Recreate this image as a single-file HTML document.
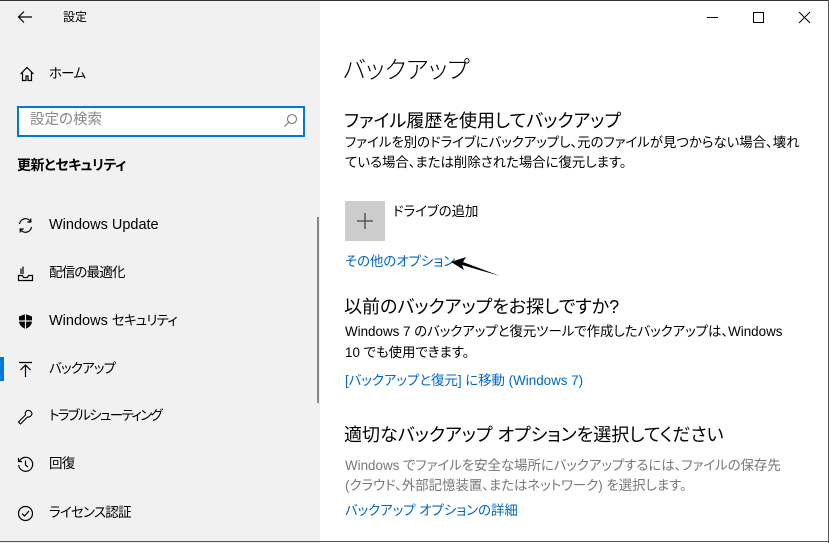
<!DOCTYPE html>
<html><head><meta charset="utf-8"><style>
*{margin:0;padding:0;box-sizing:border-box}
body{width:829px;height:543px;overflow:hidden;background:#fff;font-family:"Liberation Sans","Noto Sans CJK JP",sans-serif;color:#000;position:relative;font-feature-settings:"palt"}
.a{position:absolute;white-space:nowrap;line-height:1;font-feature-settings:"palt"}
#side{position:absolute;left:0;top:0;width:320px;height:543px;background:#f1f1f1}
.it{font-size:14.5px}
.jp{font-size:13.5px;letter-spacing:-0.8px}
.ic{position:absolute}
.blue{color:#0067c0}
.h2{font-size:18px}
.p{font-size:13.4px}
</style></head><body>
<div id="side"></div>
<div style="position:absolute;left:0;top:0;width:829px;height:1px;background:#333"></div>
<div style="position:absolute;right:0;top:0;width:1px;height:543px;background:#555"></div>
<div style="position:absolute;left:0;bottom:1px;width:829px;height:1px;background:#555"></div>

<svg class="ic" style="left:17px;top:10px" width="16" height="14" viewBox="0 0 16 14"><path d="M15 7H2M7 1.5L1.5 7 7 12.5" fill="none" stroke="#000" stroke-width="1.2"/></svg>
<div class="a" style="left:63px;top:11px;font-size:12px">設定</div>

<svg class="ic" style="left:19px;top:66px" width="16" height="16" viewBox="0 0 16 16"><path d="M1.5 8L8 1.5 14.5 8M3.5 6.5V14.5H7V10H9V14.5H12.5V6.5" fill="none" stroke="#000" stroke-width="1.2"/></svg>
<div class="a jp" style="left:49px;top:67px">ホーム</div>

<div style="position:absolute;left:17px;top:106px;width:288px;height:31px;border:2px solid #0078d7;background:#fff"></div>
<div class="a" style="left:30px;top:113px;font-size:14.5px;color:#888">設定の検索</div>
<svg class="ic" style="left:283px;top:113px" width="15" height="15" viewBox="0 0 15 15"><circle cx="9" cy="6" r="4.5" fill="none" stroke="#777" stroke-width="1.1"/><path d="M5.8 9.2L1.5 13.5" stroke="#777" stroke-width="1.1"/></svg>

<div class="a" style="left:17px;top:158px;font-size:14px;font-weight:bold;letter-spacing:-0.5px">更新とセキュリティ</div>

<svg class="ic" style="left:17px;top:217px" width="17" height="17" viewBox="0 0 17 17"><path d="M2.5 7A6 6 0 0 1 13.5 4.5M14.5 10A6 6 0 0 1 3.5 12.5" fill="none" stroke="#000" stroke-width="1.2"/><path d="M13.8 1.5V5H10.3M3.2 15.5V12H6.7" fill="none" stroke="#000" stroke-width="1.2"/></svg>
<div class="a it" style="left:49px;top:218px">Windows Update</div>

<svg class="ic" style="left:17px;top:265px" width="17" height="17" viewBox="0 0 17 17"><path d="M1.5 10.5V15.5H15.5V10.5H11.5L10.5 12.5H6.5L5.5 10.5ZM6 1.5V9M4 3.5V9" fill="none" stroke="#000" stroke-width="1.2"/></svg>
<div class="a jp" style="left:49px;top:266px">配信の最適化</div>

<svg class="ic" style="left:17px;top:313px" width="17" height="17" viewBox="0 0 17 17"><path d="M8.5 1L15 3.5V8C15 12 12 14.5 8.5 16 5 14.5 2 12 2 8V3.5Z" fill="#000"/><path d="M8.5 1V16M2 8H15" stroke="#f1f1f1" stroke-width="1.2"/></svg>
<div class="a it" style="left:49px;top:314px">Windows <span class="jp">セキュリティ</span></div>

<div style="position:absolute;left:0;top:357px;width:4px;height:24px;background:#0078d7"></div>
<svg class="ic" style="left:17px;top:361px" width="17" height="17" viewBox="0 0 17 17"><path d="M2 1.5H15M8.5 4V16M3.5 9L8.5 4 13.5 9" fill="none" stroke="#000" stroke-width="1.2"/></svg>
<div class="a jp" style="left:49px;top:362px">バックアップ</div>

<svg class="ic" style="left:17px;top:408px" width="17" height="17" viewBox="0 0 17 17"><path d="M10 2.5A4 4 0 0 1 15 6 4 4 0 0 1 10.5 9L3.5 16 1.5 14 8.5 7A4 4 0 0 1 10 2.5Z" fill="none" stroke="#000" stroke-width="1.1"/></svg>
<div class="a jp" style="left:49px;top:409px;letter-spacing:-1.6px">トラブルシューティング</div>

<svg class="ic" style="left:17px;top:456px" width="17" height="17" viewBox="0 0 17 17"><path d="M2.5 5A7 7 0 1 1 1.7 9" fill="none" stroke="#000" stroke-width="1.2"/><path d="M1.5 2V5.5H5M8.5 4.5V9L11 11" fill="none" stroke="#000" stroke-width="1.2"/></svg>
<div class="a jp" style="left:49px;top:457px">回復</div>

<svg class="ic" style="left:17px;top:505px" width="17" height="17" viewBox="0 0 17 17"><circle cx="8.5" cy="8.5" r="7" fill="none" stroke="#000" stroke-width="1.2"/><path d="M5 8.7L7.5 11 12 6" fill="none" stroke="#000" stroke-width="1.2"/></svg>
<div class="a jp" style="left:49px;top:506px">ライセンス認証</div>

<div style="position:absolute;left:317px;top:217px;width:2px;height:186px;background:#888"></div>

<div style="position:absolute;left:707px;top:17px;width:11px;height:1px;background:#000"></div>
<div style="position:absolute;left:753px;top:12px;width:11px;height:11px;border:1px solid #000"></div>
<svg class="ic" style="left:798px;top:11px" width="13" height="13" viewBox="0 0 13 13"><path d="M1 1L12 12M12 1L1 12" stroke="#000" stroke-width="1"/></svg>

<div class="a" style="left:343px;top:59px;font-size:24px;font-weight:300">バックアップ</div>
<div class="a h2" style="left:344px;top:112px">ファイル履歴を使用してバックアップ</div>
<div class="a p" style="left:345px;top:136px">ファイルを別のドライブにバックアップし、元のファイルが見つからない場合、壊れ</div>
<div class="a p" style="left:345px;top:156px">ている場合、または削除された場合に復元します。</div>

<div style="position:absolute;left:345px;top:201px;width:40px;height:40px;background:#ccc"></div>
<svg class="ic" style="left:356px;top:212px" width="18" height="18" viewBox="0 0 18 18"><path d="M9 1V17M1 9H17" stroke="#444" stroke-width="1.3"/></svg>
<div class="a p" style="left:393px;top:205px">ドライブの追加</div>
<div class="a p blue" style="left:345px;top:255px">その他のオプション</div>
<svg class="ic" style="left:448px;top:256px" width="56" height="22" viewBox="0 0 56 22"><path d="M3 6L18 1 15 6 52 20 14 9 16 14Z" fill="#000"/></svg>

<div class="a h2" style="left:344px;top:298px">以前のバックアップをお探しですか?</div>
<div class="a p" style="left:345px;top:325px">Windows 7 のバックアップと復元ツールで作成したバックアップは、Windows</div>
<div class="a p" style="left:345px;top:346px">10 でも使用できます。</div>
<div class="a p blue" style="left:345px;top:374px">[バックアップと復元] に移動 (Windows 7)</div>

<div class="a h2" style="left:344px;top:426px">適切なバックアップ オプションを選択してください</div>
<div class="a p" style="left:345px;top:459px;color:#777">Windows でファイルを安全な場所にバックアップするには、ファイルの保存先</div>
<div class="a p" style="left:345px;top:479px;color:#777">(クラウド、外部記憶装置、またはネットワーク) を選択します。</div>
<div class="a p blue" style="left:345px;top:504px">バックアップ オプションの詳細</div>
</body></html>
